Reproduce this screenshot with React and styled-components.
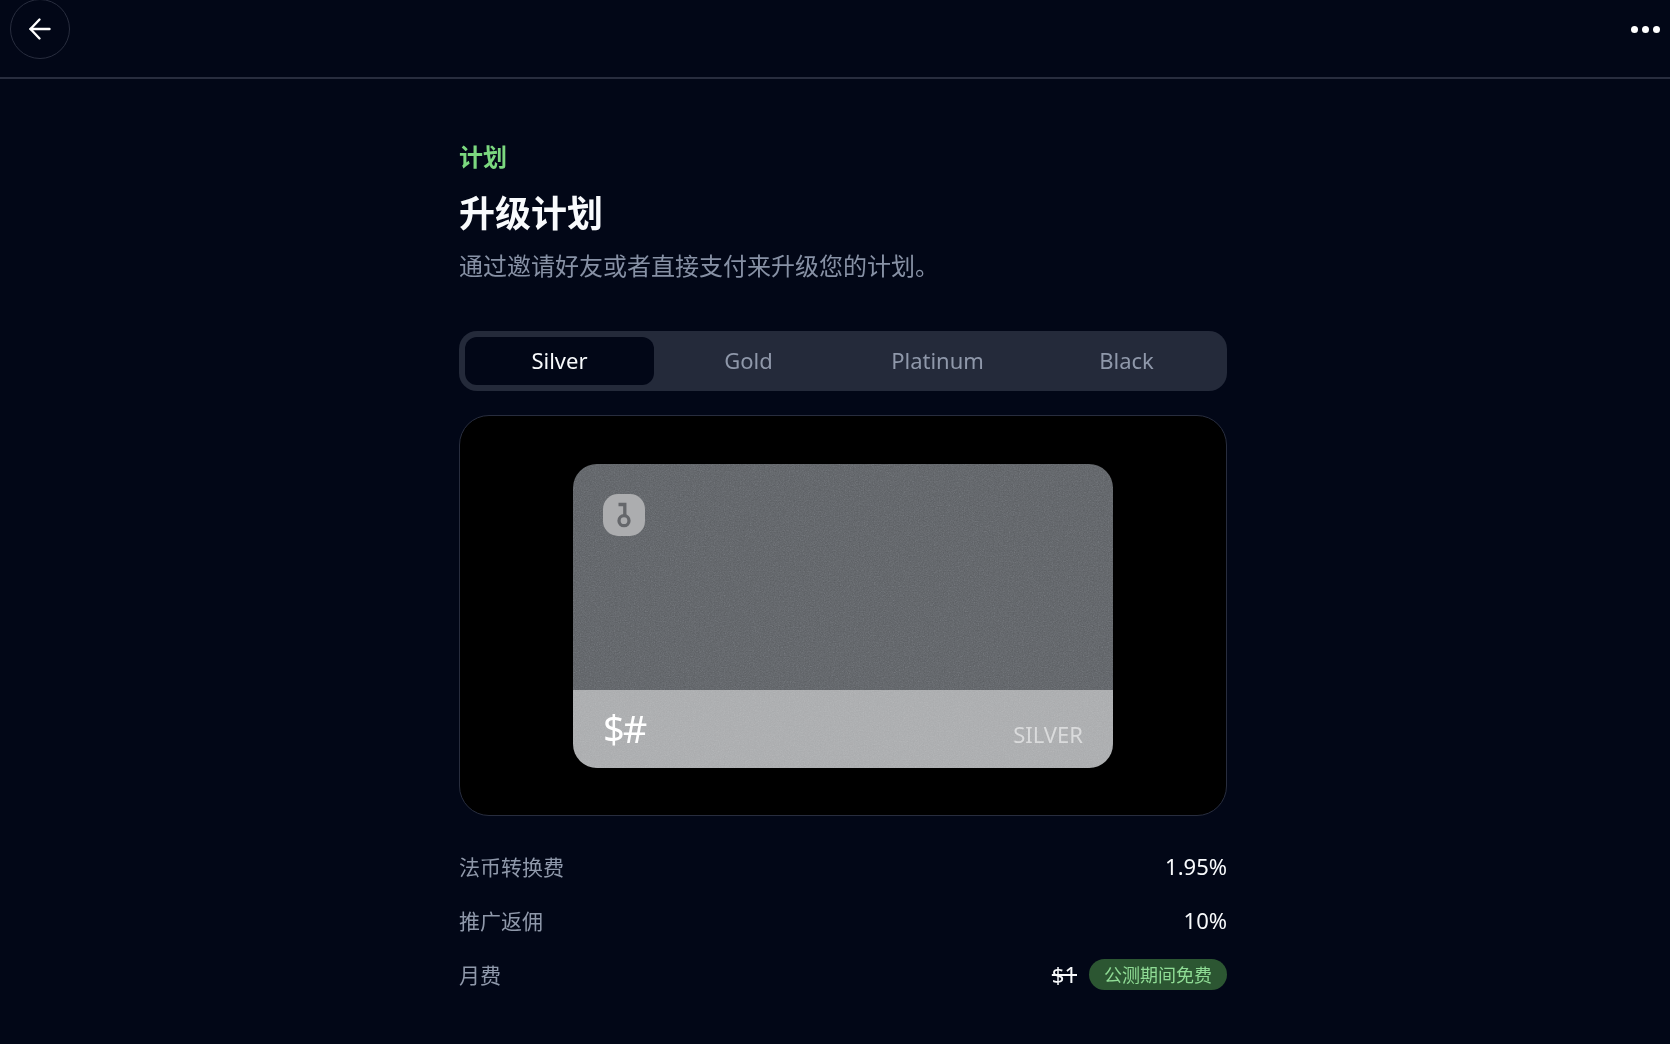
import React, { useState } from 'react'
import styled, { createGlobalStyle } from 'styled-components'

const fontStack = `"Noto Sans", "Noto Sans CJK SC", sans-serif`

const GlobalStyle = createGlobalStyle`
    html, body {
        margin: 0;
        padding: 0;
        height: 100%;
        background: #020717;
    }
    body {
        font-family: ${fontStack};
        color: #f8fafc;
    }
    * { box-sizing: border-box; }
`

const plans = ['Silver', 'Gold', 'Platinum', 'Black']

const Grain = ({ id, opacity }) => (
    <GrainSvg $opacity={opacity} aria-hidden='true'>
        <filter id={id}>
            <feTurbulence type='fractalNoise' baseFrequency='0.8' numOctaves='3' stitchTiles='stitch' />
            <feColorMatrix type='saturate' values='0' />
        </filter>
        <rect width='100%' height='100%' filter={`url(#${id})`} />
    </GrainSvg>
)

export default function App() {
    const [plan, setPlan] = useState('Silver')

    return (
        <Page>
            <GlobalStyle />
            <Header>
                <BackButton aria-label='back'>
                    <svg width='24' height='24' viewBox='0 0 24 24' fill='none' stroke='#fff' strokeWidth='2.4' strokeLinecap='round' strokeLinejoin='round'>
                        <path d='M21.5 12H2.5' />
                        <path d='M11.5 2.5L2.5 12l9 9.5' />
                    </svg>
                </BackButton>
                <MoreButton aria-label='more'>
                    <Dot /><Dot /><Dot />
                </MoreButton>
            </Header>
            <Main>
                <Content>
                    <Eyebrow>计划</Eyebrow>
                    <Title>升级计划</Title>
                    <Subtitle>通过邀请好友或者直接支付来升级您的计划。</Subtitle>

                    <Tabs>
                        {plans.map(name => (
                            <Tab key={name} $active={plan === name} onClick={() => setPlan(name)}>{name}</Tab>
                        ))}
                    </Tabs>

                    <Stage>
                        <PlanCard>
                            <CardTop>
                                <Grain id='grain-top' opacity={0.45} />
                                <KeyBadge>
                                    <svg width='22' height='32' viewBox='0 0 22 32' fill='none' stroke='#65676b' strokeWidth='3.3'>
                                        <circle cx='11' cy='21.7' r='5' />
                                        <path d='M11.8 16.5V5.5H5.5' />
                                    </svg>
                                </KeyBadge>
                            </CardTop>
                            <CardBand>
                                <Grain id='grain-band' opacity={0.25} />
                                <Symbol>$#</Symbol>
                                <PlanName>SILVER</PlanName>
                            </CardBand>
                        </PlanCard>
                    </Stage>

                    <Details>
                        <Row>
                            <Label>法币转换费</Label>
                            <Value>1.95%</Value>
                        </Row>
                        <Row>
                            <Label>推广返佣</Label>
                            <Value>10%</Value>
                        </Row>
                        <Row>
                            <Label>月费</Label>
                            <Value>
                                <OldPrice>$1</OldPrice>
                                <FreeBadge>公测期间免费</FreeBadge>
                            </Value>
                        </Row>
                    </Details>
                </Content>
            </Main>
        </Page>
    )
}

// Styled Components
const Page = styled.div`
    min-height: 1044px;
    background: #020717;
    overflow: hidden;
`

const Header = styled.header`
    height: 79px;
    padding: 0 10px;
    display: flex;
    justify-content: space-between;
    align-items: flex-start;
    border-bottom: 2px solid #282d3e;
`

const BackButton = styled.button`
    width: 60px;
    height: 60px;
    margin-top: -1px;
    padding: 0;
    display: flex;
    align-items: center;
    justify-content: center;
    background: transparent;
    border: 1px solid #282d3e;
    border-radius: 50%;
    cursor: pointer;
`

const MoreButton = styled.button`
    height: 58px;
    padding: 0;
    display: flex;
    align-items: center;
    gap: 4px;
    background: transparent;
    border: 0;
    cursor: pointer;
`

const Dot = styled.span`
    width: 7px;
    height: 7px;
    border-radius: 50%;
    background: #fff;
`

const Main = styled.main`
    padding-left: 16px;
    display: flex;
    justify-content: center;
`

const Content = styled.div`
    width: 768px;
    padding-top: 62px;
`

const Eyebrow = styled.div`
    font-size: 24px;
    line-height: 32px;
    font-weight: 700;
    color: #7bd87f;
`

const Title = styled.h1`
    margin: 17px 0 0;
    font-size: 36px;
    line-height: 48px;
    font-weight: 700;
    color: #f8fafc;
`

const Subtitle = styled.p`
    margin: 12px 0 0;
    font-size: 24px;
    line-height: 32px;
    color: #8791a5;
`

const Tabs = styled.div`
    margin-top: 49px;
    height: 60px;
    padding: 6px;
    display: grid;
    grid-template-columns: repeat(4, 1fr);
    background: #242a3a;
    border-radius: 18px;
`

const Tab = styled.button`
    padding: 0 0 2px;
    font-family: inherit;
    font-size: 22px;
    color: ${props => props.$active ? '#f8fafc' : '#8f98aa'};
    background: ${props => props.$active ? '#020717' : 'transparent'};
    border: 0;
    border-radius: 12px;
    cursor: pointer;
`

const Stage = styled.div`
    margin-top: 24px;
    height: 401px;
    display: flex;
    align-items: center;
    justify-content: center;
    background: #000;
    border: 1px solid #282d3e;
    border-radius: 30px;
`

const PlanCard = styled.div`
    width: 540px;
    height: 304px;
    display: flex;
    flex-direction: column;
    border-radius: 24px;
    overflow: hidden;
`

const CardTop = styled.div`
    position: relative;
    flex: 1;
    padding: 30px;
    background: #5c5f63;
`

const CardBand = styled.div`
    position: relative;
    height: 78px;
    padding: 0 30px;
    display: flex;
    align-items: flex-start;
    justify-content: space-between;
    background: #a9abad;
`

const GrainSvg = styled.svg`
    position: absolute;
    inset: 0;
    width: 100%;
    height: 100%;
    opacity: ${props => props.$opacity};
    mix-blend-mode: overlay;
    pointer-events: none;
`

const KeyBadge = styled.div`
    position: relative;
    width: 42px;
    height: 42px;
    display: flex;
    align-items: center;
    justify-content: center;
    background: #acadaf;
    border-radius: 15px;
`

const Symbol = styled.div`
    position: relative;
    margin-top: 12px;
    font-size: 38px;
    line-height: 52px;
    letter-spacing: -2px;
    color: #fff;
`

const PlanName = styled.div`
    position: relative;
    margin-top: 28px;
    font-size: 22px;
    line-height: 32px;
    color: #dadbdc;
`

const Details = styled.div`
    margin-top: 34px;
    display: flex;
    flex-direction: column;
    gap: 22px;
`

const Row = styled.div`
    height: 32px;
    display: flex;
    align-items: center;
    justify-content: space-between;
    font-size: 21px;
`

const Label = styled.span`
    color: #8f98aa;
`

const Value = styled.span`
    display: flex;
    align-items: center;
    gap: 12px;
    font-size: 22px;
    color: #f8fafc;
`

const OldPrice = styled.s`
    color: #f8fafc;
`

const FreeBadge = styled.span`
    height: 31px;
    padding: 0 15px;
    display: flex;
    align-items: center;
    font-size: 18px;
    color: #8fdc95;
    background: #2c5632;
    border-radius: 16px;
`
